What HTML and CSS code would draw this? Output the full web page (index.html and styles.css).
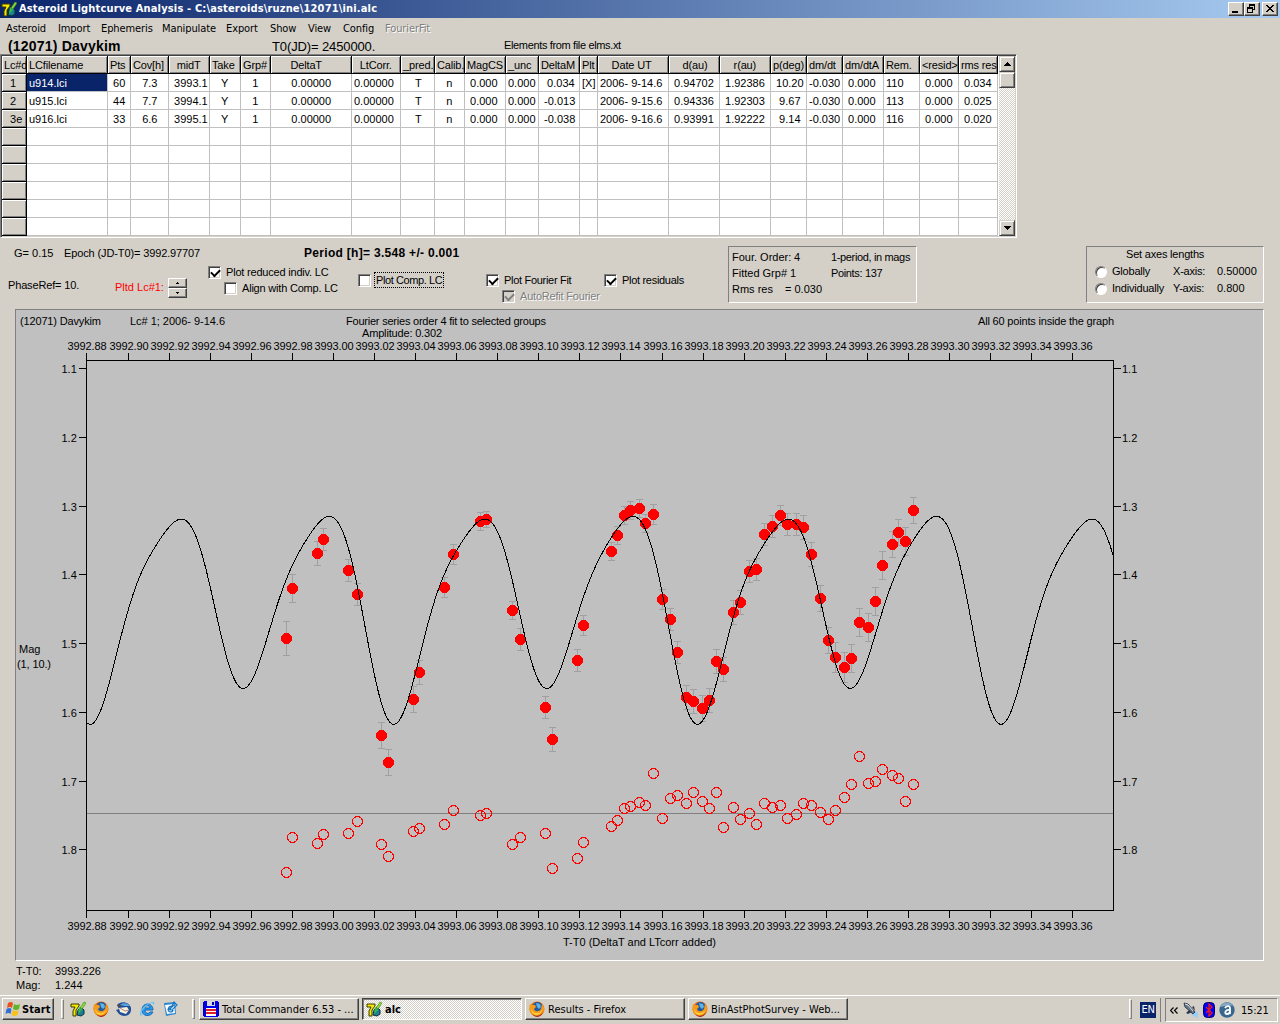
FILE: index.html
```html
<!DOCTYPE html>
<html lang="en">
<head>
    <meta charset="UTF-8">
    <title>Asteroid Lightcurve Analysis</title>
    <link rel="stylesheet" href="styles.css">
</head>
<body>
    <svg class="symbols">
        <symbol id="ico-alc" viewBox="0 0 16 16">
            <path d="M1 3h8v2L6 9v6H3v-5l2-4H1z" fill="#f5e800" stroke="#3a3a00"/>
            <path d="M8 9l3-3 3 3v4l-3 2-4-1z" fill="#1f7f94" stroke="#083038"/>
            <path d="M10 7l4-6 2 1-4 6z" fill="#8be02c" stroke="#3d8020" stroke-width=".6"/>
            <path d="M9 6l3 3-4 4z" fill="#32bb45"/>
        </symbol>
        <symbol id="ico-firefox" viewBox="0 0 16 16">
            <circle cx="8" cy="8" r="7.5" fill="#e56a10"/>
            <circle cx="8.5" cy="6" r="5" fill="#23599f"/>
            <path d="M7 2l4 1 1 3-2 2-2-2z" fill="#5eb3e8"/>
            <path d="M1 3l2 1 3 0 1 2-2 2c1 3 5 3 7 0l1-5c4 4 2 11-4 12C2 16-1 9 1 3z" fill="#f59b1c"/>
            <path d="M2 8c2 5 8 6 11 1-1 6-10 7-11-1z" fill="#ffd53d"/>
            <path d="M3 13c4 3 9 2 11-2-1 5-7 7-11 2z" fill="#a82a10"/>
        </symbol>
        <symbol id="ico-thunderbird" viewBox="0 0 16 16">
            <path d="M1 4c4-5 13-3 14 3 1 8-7 10-12 6l-3-4 3-1z" fill="#1f4f96"/>
            <path d="M4 4c3-3 8-2 10 1l-5 0z" fill="#5ea5dc"/>
            <path d="M3 7l8-1 2 3-3 4-6-2z" fill="#f4f0e5"/>
            <path d="M4 7l5 3 4-1" fill="none" stroke="#a86840" stroke-width=".8"/>
            <path d="M1 5l3-2 0 3z" fill="#7a3e20"/>
        </symbol>
        <symbol id="ico-ie" viewBox="0 0 16 16">
            <path d="M14 9H6c0 4 4 4 5 2h3c-2 5-11 5-11-2 0-8 11-8 11 0zM6 7h5c0-3-5-3-5 0z" fill="#2b9be8" stroke="#1668b8"/>
            <path d="M1 14C0 9 8 1 15 1c1 1 0 2-1 3 0-1 0-2-1-2C8 3 3 9 2 13c1 1 3 0 4-1-2 2-4 3-5 2z" fill="#65c3f5"/>
        </symbol>
        <symbol id="ico-outlook" viewBox="0 0 16 16">
            <path d="M2 2l11-1 1 12-10 2z" fill="#2d86d0"/>
            <path d="M3 4l9-1 1 9-8 1z" fill="#fff"/>
            <path d="M11 6c-4-3-7 4-3 5 2 0 3-1 3-2M6 9l6-5M12 1l3 3-5 5-2 0z" fill="none" stroke="#1678c4" stroke-width="1.2"/>
        </symbol>
        <symbol id="ico-floppy" viewBox="0 0 16 16" shape-rendering="crispEdges">
            <path d="M1 0h14v16H1z" fill="#00f"/>
            <path d="M0 1h16v14H0z" fill="#0000b0"/>
            <path d="M1 1h14v14H1z" fill="#0000e8"/>
            <path d="M4 0h8v5H4z" fill="#d8d8e0"/>
            <path d="M9 1h2v3H9z" fill="#0000b0"/>
            <path d="M3 7h10v8H3z" fill="#fff"/>
            <path d="M3 8h10v2H3zM3 11h10v2H3z" fill="#e02020"/>
        </symbol>
        <symbol id="ico-windows" viewBox="0 0 16 16">
            <path d="M3 2q3-2 5 0L7 7Q5 5 2 7z" fill="#e8501c"/>
            <path d="M9 3q3 2 6 0l-1 5q-3 2-6 0z" fill="#5fb52a"/>
            <path d="M1.500 8q3-2 5 0l-1 5q-2-2-5 0z" fill="#2f70d8"/>
            <path d="M7.500 9q3 2 6 0l-1 5q-3 2-6 0z" fill="#f8c21c"/>
        </symbol>
        <symbol id="ico-rocket" viewBox="0 0 16 16">
            <path d="M10 9l5 1 0 6-5-2-2-2z" fill="#9ad0f8"/>
            <path d="M1 1l4 1 7 8-2 2-8-7z" fill="#68788a" stroke="#202830" stroke-width=".8"/>
            <path d="M6 8l-3 3 2 1 4-2zM9 5l2-1 1 5z" fill="#303c48"/>
            <path d="M2 2l3 1 5 6" stroke="#d8e4f0" fill="none"/>
        </symbol>
        <symbol id="ico-bluetooth" viewBox="0 0 12 16">
            <rect x=".5" y=".5" width="11" height="15" rx="4" fill="#0000ff" stroke="#000060"/>
            <path d="M3 5l6 6-3 3V2l3 3-6 6" fill="none" stroke="#f01818" stroke-width="1.300"/>
        </symbol>
        <symbol id="ico-ball" viewBox="0 0 16 16">
            <circle cx="8" cy="8" r="7.700" fill="#37678f"/>
            <path d="M1 5c2-5 10-6 13-1-5-1-8 0-13 1z" fill="#86aac6"/>
            <path d="M6 6c2-3 5-2 5 0v6M11 8c-5-1-6 4-3 4 2 0 3-1 3-3" fill="none" stroke="#fff" stroke-width="1.800"/>
        </symbol>
    </svg>

    <div class="titlebar">
        <svg class="icon"><use href="#ico-alc"/></svg>
        <span class="title">Asteroid Lightcurve Analysis - C:\asteroids\ruzne\12071\ini.alc</span>
        <div class="win-buttons">
            <button class="win-btn"><svg width="12" height="10" shape-rendering="crispEdges"><path d="M2 7h6v2H2z"/></svg></button>
            <button class="win-btn"><svg width="12" height="10" shape-rendering="crispEdges"><path d="M3 0h6v6H7V5h1V2H4v1H3zM1 3h6v6H1zM2 5v3h4V5z" fill-rule="evenodd"/></svg></button>
            <button class="win-btn close"><svg width="12" height="10" shape-rendering="crispEdges"><path d="M2 1h2v1h1v1h2V2h1V1h2v1H9v1H8v1H7v1h1v1h1v1h1v1H8V7H7V6H5v1H4v1H2V7h1V6h1V5h1V4H4V3H3V2H2z"/></svg></button>
        </div>
    </div>

    <div class="menu">
        <span>Asteroid</span><span>Import</span><span>Ephemeris</span><span>Manipulate</span><span>Export</span><span>Show</span><span>View</span><span>Config</span><span class="disabled">FourierFit</span>
    </div>

    <div class="object-row">
        <span class="object-name">(12071) Davykim</span>
        <span class="object-t0">T0(JD)= 2450000.</span>
        <span class="object-elements">Elements from file elms.xt</span>
    </div>

    <div class="lc-box">
        <div id="lc-table"></div>
        <div class="scroll">
            <div class="scroll-btn"><svg width="7" height="4" shape-rendering="crispEdges"><path d="M3 0h1v1h1v1h1v1h1v1H0V3h1V2h1V1h1z"/></svg></div>
            <div class="scroll-thumb"></div>
            <div class="scroll-track"></div>
            <div class="scroll-btn"><svg width="7" height="4" shape-rendering="crispEdges"><path d="M0 0h7v1H6v1H5v1H4v1H3V3H2V2H1V1H0z"/></svg></div>
        </div>
    </div>

    <div class="controls">
        <div class="controls-left">
            <div class="info-row">
                <span class="info-g">G= 0.15</span>
                <span class="info-epoch">Epoch (JD-T0)= 3992.97707</span>
                <span class="info-period">Period [h]= 3.548 +/- 0.001</span>
            </div>
            <div class="options">
                <span class="phase">PhaseRef= 10.</span>
                <span class="plotted">Pltd Lc#1:</span>
                <div class="spinner">
                    <div class="spin-btn"><svg width="3" height="2" shape-rendering="crispEdges"><path d="M1 0h1v1h1v1H0V1h1z"/></svg></div>
                    <div class="spin-btn"><svg width="3" height="2" shape-rendering="crispEdges"><path d="M0 0h3v1H2v1H1V1H0z"/></svg></div>
                </div>
                <div class="opt-col opt-reduced">
                    <div class="check checked"><i></i><span>Plot reduced indiv. LC</span></div>
                    <div class="check sub"><i></i><span>Align with Comp. LC</span></div>
                </div>
                <div class="opt-col opt-comp">
                    <div class="check focused"><i></i><span>Plot Comp. LC</span></div>
                </div>
                <div class="opt-col opt-fit">
                    <div class="check checked"><i></i><span>Plot Fourier Fit</span></div>
                    <div class="check checked sub off"><i></i><span>AutoRefit Fourier</span></div>
                </div>
                <div class="opt-col">
                    <div class="check checked"><i></i><span>Plot residuals</span></div>
                </div>
            </div>
        </div>
        <div class="panel fit-info">
            <span>Four. Order:</span><span>4</span><span class="tight">1-period, in mags</span>
            <span>Fitted Grp# 1</span><span></span><span class="tight">Points: 137</span>
            <span>Rms res</span><span class="rms">= 0.030</span><span></span>
        </div>
        <div class="panel axes">
            <div class="axes-title">Set axes lengths</div>
            <div class="axes-row"><i class="radio"></i><span>Globally</span><span>X-axis:</span><span class="num">0.50000</span></div>
            <div class="axes-row"><i class="radio"></i><span>Individually</span><span>Y-axis:</span><span class="num">0.800</span></div>
        </div>
    </div>

    <div class="plot">
        <svg id="graph" width="1247" height="650" viewBox="16 310 1247 650"></svg>
    </div>

    <div class="status">
        <span>T-T0:</span><span>3993.226</span>
        <span>Mag:</span><span>1.244</span>
    </div>

    <div class="taskbar">
        <div class="start"><svg class="icon"><use href="#ico-windows"/></svg><span>Start</span></div>
        <div class="sep"></div>
        <div class="quick">
            <svg class="icon"><use href="#ico-alc"/></svg>
            <svg class="icon"><use href="#ico-firefox"/></svg>
            <svg class="icon"><use href="#ico-thunderbird"/></svg>
            <svg class="icon"><use href="#ico-ie"/></svg>
            <svg class="icon"><use href="#ico-outlook"/></svg>
        </div>
        <div class="sep"></div>
        <div class="tasks">
            <div class="task"><svg class="icon"><use href="#ico-floppy"/></svg><span>Total Commander 6.53 - ...</span></div>
            <div class="task active"><svg class="icon"><use href="#ico-alc"/></svg><span>alc</span></div>
            <div class="task"><svg class="icon"><use href="#ico-firefox"/></svg><span>Results - Firefox</span></div>
            <div class="task"><svg class="icon"><use href="#ico-firefox"/></svg><span>BinAstPhotSurvey - Web...</span></div>
        </div>
        <div class="sep sep-right"></div>
        <div class="lang">EN</div>
        <div class="sep-thin"></div>
        <div class="tray">
            <svg class="chevrons" width="8" height="7"><path d="M3.500 .5l-3 3 3 3M7.500 .5l-3 3 3 3" fill="none" stroke="#000" stroke-width="1.200"/></svg>
            <svg class="icon"><use href="#ico-rocket"/></svg>
            <svg class="icon bt"><use href="#ico-bluetooth"/></svg>
            <svg class="icon"><use href="#ico-ball"/></svg>
            <span>15:21</span>
        </div>
    </div>

    <script src="script.js"></script>
</body>
</html>
```
FILE: styles.css
```css
* {
    box-sizing: border-box;
}

body {
    margin: 0;
    width: 1280px;
    height: 1024px;
    overflow: hidden;
    background: #d4d0c8;
    color: #000;
    font: 11px/13px "Liberation Sans", Arial, sans-serif;
    white-space: pre;
    display: flex;
    flex-direction: column;
}

body > *, .lc-box > *, .controls > *, .taskbar > * {
    flex-shrink: 0;
}

div, button {
    white-space: nowrap;
}

.symbols {
    display: none;
}

svg {
    display: block;
}

.icon {
    width: 16px;
    height: 16px;
    flex: none;
}

/* title bar */
.titlebar {
    height: 18px;
    display: flex;
    align-items: center;
    padding: 0 2px 0 1px;
    background: linear-gradient(to right, #0a246a, #a6caf0);
}

.title {
    margin-left: 2px;
    color: #fff;
    font: bold 11px/16px "DejaVu Sans Condensed", "DejaVu Sans", sans-serif;
    font-stretch: condensed;
    letter-spacing: 0.16px;
}

.win-buttons {
    margin-left: auto;
    display: flex;
}

.win-btn {
    width: 16px;
    height: 14px;
    padding: 1px;
    border: 1px solid;
    border-color: #fff #404040 #404040 #fff;
    box-shadow: inset -1px -1px #808080;
    background: #d4d0c8;
}

.win-btn.close {
    margin-left: 2px;
}

/* menu */
.menu {
    height: 20px;
    padding: 4px 0 0 6px;
    display: grid;
    grid-template-columns: 52px 43px 61px 64px 44px 38px 35px 42px 60px;
    font: 11px/13px "DejaVu Sans Condensed", "DejaVu Sans", sans-serif;
    font-stretch: condensed;
    letter-spacing: -0.1px;
}

.disabled {
    color: #808080;
    text-shadow: 1px 1px #fff;
}

.object-row {
    height: 16px;
    display: flex;
    line-height: 17px;
}

.object-name {
    width: 264px;
    margin-left: 8px;
    font-weight: bold;
    font-size: 14px;
    letter-spacing: 0.2px;
}

.object-t0 {
    width: 232px;
    font-size: 13px;
    letter-spacing: -0.12px;
}

.object-elements {
    line-height: 14px;
    letter-spacing: -0.35px;
}

/* lightcurve table */
.lc-box {
    width: 1017px;
    height: 184px;
    display: flex;
    background: #fff;
    border: 1px solid;
    border-color: #808080 #fff #fff #808080;
    box-shadow: inset 1px 1px #404040, inset -1px -1px #d4d0c8;
    padding: 1px;
}

#lc-table {
    width: 997px;
}

.lc-row {
    display: grid;
    grid-template-columns: 25px 81px 23px 38px 41px 31px 30px 81px 49px 34px 30px 41px 33px 41px 18px 71px 51px 51px 36px 36px 41px 36px 39px 39px;
    height: 18px;
}

.lc-row span {
    padding: 3px 0 0 2px;
    line-height: 13px;
    overflow: hidden;
    white-space: pre;
    border-right: 1px solid #c0c0c0;
    border-bottom: 1px solid #c0c0c0;
}

.lc-row.head span {
    letter-spacing: -0.15px;
}

.lc-row.head span, .lc-row span:first-child {
    background: #d4d0c8;
    border-color: #000;
    box-shadow: inset 1px 1px #fff, inset -1px -1px #808080;
}

.lc-row .selected {
    background: #0a246a;
    color: #fff;
}

.scroll {
    width: 16px;
    display: flex;
    flex-direction: column;
}

.scroll-btn, .scroll-thumb {
    height: 16px;
    display: flex;
    align-items: center;
    justify-content: center;
    background: #d4d0c8;
    border: 1px solid;
    border-color: #d4d0c8 #404040 #404040 #d4d0c8;
    box-shadow: inset 1px 1px #fff, inset -1px -1px #808080;
}

.scroll-track, .task.active {
    background: repeating-conic-gradient(#fff 0 25%, #d4d0c8 0 50%) 0 0 / 2px 2px;
}

.scroll-track {
    flex: 1;
}

/* controls */
.controls {
    height: 71px;
    display: flex;
    padding-top: 8px;
}

.controls-left {
    width: 728px;
}

.info-row {
    display: flex;
    height: 17px;
    padding: 1px 0 0 14px;
}

.info-g {
    width: 50px;
}

.info-epoch {
    width: 240px;
    letter-spacing: -0.12px;
}

.info-period {
    font-weight: bold;
    font-size: 12px;
    letter-spacing: 0.3px;
}

.options {
    display: flex;
}

.phase {
    width: 107px;
    margin-left: 8px;
    padding-top: 16px;
    letter-spacing: -0.15px;
}

.plotted {
    width: 53px;
    padding-top: 18px;
    color: #f00;
}

.spinner {
    margin: 15px 21px 0 0;
}

.spin-btn {
    width: 19px;
    height: 10px;
    display: flex;
    align-items: center;
    justify-content: center;
    border: 1px solid;
    border-color: #fff #404040 #404040 #fff;
    box-shadow: inset -1px -1px #808080;
}

.opt-col {
    padding-top: 9px;
    letter-spacing: -0.3px;
}

.opt-reduced {
    width: 150px;
    padding-top: 1px;
    letter-spacing: -0.2px;
}

.opt-comp {
    width: 128px;
    letter-spacing: -0.4px;
}

.opt-fit {
    width: 118px;
}

.check {
    height: 16px;
    display: flex;
    align-items: flex-start;
}

.check i {
    width: 13px;
    height: 13px;
    margin: 2px 4px 0 0;
    background: #fff;
    border: 1px solid;
    border-color: #808080 #fff #fff #808080;
    box-shadow: inset 1px 1px #404040, inset -1px -1px #d4d0c8;
}

.check span {
    margin-top: 1px;
    padding: 0 1px;
    line-height: 14px;
}

.check.checked i::after {
    content: "";
    display: block;
    width: 7px;
    height: 4px;
    margin: 2px 0 0 2px;
    border: solid #000;
    border-width: 0 0 2px 2px;
    transform: rotate(-45deg);
}

.check.sub {
    margin-left: 16px;
}

.check.focused span {
    outline: 1px dotted #000;
}

.check.off span {
    color: #808080;
    text-shadow: 1px 1px #fff;
    letter-spacing: -0.2px;
}

.check.off i {
    background: #d4d0c8;
}

.check.checked.off i::after {
    border-color: #808080;
}

.panel {
    height: 57px;
    border: 1px solid;
    border-color: #808080 #fff #fff #808080;
}

.fit-info {
    width: 189px;
    padding: 4px 0 0 3px;
    display: grid;
    grid-template-columns: 62px 37px 80px;
    grid-auto-rows: 16px;
}

.fit-info .tight {
    letter-spacing: -0.35px;
}

.fit-info .rms {
    margin-left: -9px;
}

.axes {
    width: 178px;
    margin-left: 169px;
    letter-spacing: -0.2px;
}

.axes .num {
    letter-spacing: 0;
}

.axes-title {
    padding-left: 39px;
    height: 16px;
    line-height: 15px;
}

.axes-row {
    height: 17px;
    display: grid;
    grid-template-columns: 17px 61px 44px 50px;
    padding-left: 8px;
    align-items: center;
}

.radio {
    width: 12px;
    height: 12px;
    border-radius: 50%;
    background: #fff;
    border: 1px solid;
    border-color: #808080 #fff #fff #808080;
    box-shadow: inset 1px 1px #404040;
}

/* plot */
.plot {
    width: 1249px;
    height: 652px;
    margin-left: 15px;
    background: #c0c0c0;
    border: 1px solid;
    border-color: #808080 #fff #fff #808080;
}

#graph {
    font-size: 11px;
}

#graph path, #graph line, #graph circle {
    shape-rendering: crispEdges;
    fill: none;
}

.axis {
    stroke: #000;
}

.fit {
    stroke: #000;
}

.zero {
    stroke: #808080;
}

.error {
    stroke: #a0a0a0;
}

#graph .point {
    fill: #f00;
}

.residual {
    stroke: #f00;
}

.mid {
    text-anchor: middle;
}

.status {
    height: 34px;
    padding: 4px 0 0 16px;
    display: grid;
    grid-template-columns: 39px 80px;
    grid-auto-rows: 14px;
}

/* taskbar */
.taskbar {
    height: 29px;
    border-top: 1px solid #fff;
    display: flex;
    padding: 2px 2px 0 2px;
    font: 11px/13px "DejaVu Sans Condensed", "DejaVu Sans", sans-serif;
    font-stretch: condensed;
}

.start, .task {
    height: 22px;
    display: flex;
    align-items: center;
    border: 1px solid;
    border-color: #fff #404040 #404040 #fff;
    box-shadow: inset -1px -1px #808080;
}

.start {
    width: 52px;
    padding-left: 2px;
    font-weight: bold;
}

.start span {
    margin-left: 1px;
    letter-spacing: 0.1px;
}

.sep {
    width: 3px;
    height: 20px;
    margin: 1px 0 0 7px;
    border: 1px solid;
    border-color: #fff #808080 #808080 #fff;
}

.quick {
    width: 128px;
    padding: 3px 0 0 6px;
    display: flex;
    gap: 7px;
}

.quick + .sep {
    margin-left: 0;
}

.tasks {
    display: flex;
    gap: 3px;
    margin-left: 4px;
}

.task {
    width: 160px;
    padding-left: 3px;
}

.task span {
    margin-left: 3px;
}

.task.active {
    border-color: #404040 #fff #fff #404040;
    box-shadow: inset 1px 1px #808080;
    font-weight: bold;
}

.sep-right {
    margin-left: auto;
}

.lang {
    width: 16px;
    height: 16px;
    margin: 4px 4px 0 8px;
    background: #0a246a;
    color: #fff;
    text-align: center;
    line-height: 16px;
    letter-spacing: -0.3px;
}

.sep-thin {
    width: 1px;
    height: 24px;
    background: #808080;
}

.tray {
    width: 113px;
    height: 24px;
    margin-left: 4px;
    border: 1px solid;
    border-color: #808080 #fff #fff #808080;
    display: flex;
    align-items: center;
    padding-left: 4px;
}

.chevrons {
    margin-right: 5px;
}

.tray .bt {
    width: 12px;
    margin: 0 4px;
}

.tray span {
    margin-left: 6px;
    letter-spacing: -0.2px;
}
```
FILE: script.js
```js
// cells keep their leading blanks, the grid is left aligned
const header = ["Lc#d", "LCfilename", "Pts", "Cov[h]", "  midT", "Take", "Grp#", "      DeltaT", "  LtCorr.", "_pred.", "Calib.", "MagCS", "_unc", "DeltaM", "Plt", "    Date UT", "    d(au)", "    r(au)", "p(deg)", "dm/dt", "dm/dtA", "Rem.", "<resid>", "rms res"];
const rows = [
    ["  1", "u914.lci", " 60", "   7.3", " 3993.1", "   Y", "   1", "      0.00000", "0.00000", "    T", "   n", " 0.000", "0.000", "  0.034", "[X]", "2006- 9-14.6", " 0.94702", " 1.92386", " 10.20", "-0.030", " 0.000", "110", " 0.000", " 0.034"],
    ["  2", "u915.lci", " 44", "   7.7", " 3994.1", "   Y", "   1", "      0.00000", "0.00000", "    T", "   n", " 0.000", "0.000", " -0.013", "", "2006- 9-15.6", " 0.94336", " 1.92303", "  9.67", "-0.030", " 0.000", "113", " 0.000", " 0.025"],
    ["  3e", "u916.lci", " 33", "   6.6", " 3995.1", "   Y", "   1", "      0.00000", "0.00000", "    T", "   n", " 0.000", "0.000", " -0.038", "", "2006- 9-16.6", " 0.93991", " 1.92222", "  9.14", "-0.030", " 0.000", "116", " 0.000", " 0.020"]
];

const table = document.querySelector("#lc-table");

function addRow(cells, cls) {
    const row = document.createElement("div");
    row.className = cls;
    for (let i = 0; i < header.length; i++) {
        const cell = document.createElement("span");
        cell.textContent = cells[i] || "";
        row.append(cell);
    }
    table.append(row);
    return row;
}

addRow(header, "lc-row head");
for (let i = 0; i < 9; i++) {
    const row = addRow(rows[i] || [], "lc-row");
    if (i == 0) row.children[1].className = "selected";
}

// graph
const graph = document.querySelector("#graph");
const L = 86, R = 1113, T = 360, B = 910;

function add(name, attrs, text) {
    const el = document.createElementNS("http://www.w3.org/2000/svg", name);
    for (const a in attrs) el.setAttribute(a, attrs[a]);
    if (text) el.textContent = text;
    graph.append(el);
}

function label(x, y, text, width, cls) {
    const attrs = { x: x, y: y };
    if (width) attrs.textLength = width;
    if (cls) attrs.class = cls;
    add("text", attrs, text);
}

label(20, 325, "(12071) Davykim", 81);
label(130, 325, "Lc# 1; 2006- 9-14.6", 95);
label(346, 325, "Fourier series order 4 fit to selected groups", 200);
label(362, 337, "Amplitude: 0.302", 80);
label(978, 325, "All 60 points inside the graph", 136);
label(563, 946, "T-T0 (DeltaT and LTcorr added)", 153);
label(19, 653, "Mag");
label(17, 668, "(1, 10.)", 34);

let axis = `M${L + .5} ${T + .5}H${R + .5}V${B + .5}H${L + .5}Z`;
for (let i = 0; i < 25; i++) {
    const x = Math.round(86.45 + 41.08 * i);
    const t = (3992.88 + i * 0.02).toFixed(2);
    axis += `M${x + .5} ${T - 7}V${T}M${x + .5} ${B + 1}V${B + 8}`;
    label(x + 1, 350, t, 39, "mid");
    label(x + 1, 930, t, 39, "mid");
}
for (let i = 0; i < 8; i++) {
    const y = Math.round(368.32 + 68.7 * i);
    axis += `M${L - 7} ${y + .5}H${L}M${R + 1} ${y + .5}H${R + 8}`;
    label(61.5, y + 5, (1.1 + i * 0.1).toFixed(1));
    label(1122, y + 5, (1.1 + i * 0.1).toFixed(1));
}
add("path", { d: axis, class: "axis" });
add("line", { x1: L + 1, y1: 813.5, x2: R, y2: 813.5, class: "zero" });

// x, y, error, residual
const points = [
    [286, 638, 17, 872], [292, 588, 14, 837], [317, 553, 12, 843], [323, 539, 11, 834], [348, 570, 11, 833],
    [357, 594, 11, 821], [381, 735, 13, 844], [388, 762, 13, 856], [413, 699, 13, 831], [419, 672, 12, 828],
    [444, 587, 10, 824], [453, 554, 10, 810], [480, 521, 9, 815], [486, 519, 8, 813], [512, 610, 9, 844],
    [520, 639, 11, 837], [545, 707, 11, 833], [552, 739, 12, 868], [577, 660, 11, 858], [583, 625, 10, 842],
    [611, 551, 9, 826], [617, 535, 9, 820], [624, 515, 9, 808], [630, 510, 9, 806], [639, 508, 9, 802],
    [645, 523, 9, 805], [653, 514, 10, 773], [662, 599, 10, 818], [670, 619, 11, 798], [677, 652, 11, 795],
    [686, 697, 12, 803], [693, 701, 12, 792], [702, 708, 13, 801], [709, 700, 12, 808], [716, 661, 12, 792],
    [723, 669, 12, 827], [733, 612, 12, 807], [740, 602, 12, 819], [749, 571, 11, 813], [756, 569, 11, 824],
    [764, 534, 11, 803], [772, 526, 11, 807], [780, 515, 10, 805], [787, 524, 11, 818], [796, 524, 11, 814],
    [803, 527, 12, 803], [811, 554, 12, 805], [820, 598, 13, 812], [828, 640, 13, 819], [835, 657, 15, 810],
    [844, 667, 15, 797], [851, 658, 14, 784], [859, 622, 14, 756], [868, 627, 14, 783], [875, 601, 14, 781],
    [882, 565, 14, 769], [892, 544, 13, 775], [898, 532, 13, 778], [905, 541, 14, 801], [913, 510, 13, 784]
];
for (const [px, py, e, r] of points) {
    const x = px + .5, y = py + .5;
    add("path", { d: `M${x} ${y - e}V${y + e}M${x - 3.5} ${y - e}h7M${x - 3.5} ${y + e}h7`, class: "error" });
    add("circle", { cx: x, cy: r + .5, r: 5, class: "residual" });
}
for (const [px, py] of points) {
    add("circle", { cx: px + .5, cy: py + .5, r: 5.5, class: "point" });
}

// one period of the mean curve, then a Fourier series of order 4 through it
const period = 303.6, start = 90.4;
const nodes = [
    [0, 727], [8, 716], [15, 696.5], [20, 677], [30.5, 636], [41.5, 598], [56.5, 561.5], [73, 535], [83, 522.5], [91.3, 518.6],
    [99.5, 524], [109, 543.5], [116.5, 575], [124.7, 612], [133, 646.5], [139, 664], [146, 680.5], [153, 687], [160.5, 681.5], [168, 667],
    [175, 646.5], [181.5, 621.5], [190, 595], [196.5, 577], [205, 558], [217, 539], [228, 523.5], [238.8, 516], [248, 522.5],
    [255.5, 540], [262, 566], [268.5, 595.5], [276.5, 634], [283, 668], [289.7, 698], [296.5, 719]
];

function node(i) {
    const n = nodes.length;
    const turn = Math.floor(i / n);
    const p = nodes[i - turn * n];
    return [p[0] + turn * period, p[1]];
}

function meanCurve(x) {
    let i = 0;
    while (i < nodes.length - 1 && nodes[i + 1][0] <= x) i++;
    const [a, b, c, d] = [node(i - 1), node(i), node(i + 1), node(i + 2)];
    const h = c[0] - b[0], t = (x - b[0]) / h;
    const m1 = (c[1] - a[1]) / (c[0] - a[0]) * h;
    const m2 = (d[1] - b[1]) / (d[0] - b[0]) * h;
    return (2 * t ** 3 - 3 * t ** 2 + 1) * b[1] + (t ** 3 - 2 * t ** 2 + t) * m1 + (3 * t ** 2 - 2 * t ** 3) * c[1] + (t ** 3 - t ** 2) * m2;
}

const N = 600, cos = [0, 0, 0, 0, 0], sin = [0, 0, 0, 0, 0];
for (let s = 0; s < N; s++) {
    const y = meanCurve(s / N * period);
    for (let k = 0; k <= 4; k++) {
        cos[k] += y * Math.cos(2 * Math.PI * k * s / N) * (k ? 2 : 1) / N;
        sin[k] += y * Math.sin(2 * Math.PI * k * s / N) * 2 / N;
    }
}

let d = "";
for (let x = L + 1; x <= R; x++) {
    const ph = 2 * Math.PI * (x - start) / period;
    let y = cos[0];
    for (let k = 1; k <= 4; k++) y += cos[k] * Math.cos(k * ph) + sin[k] * Math.sin(k * ph);
    d += (d ? "L" : "M") + x + " " + y.toFixed(2);
}
add("path", { d: d, class: "fit" });
```
